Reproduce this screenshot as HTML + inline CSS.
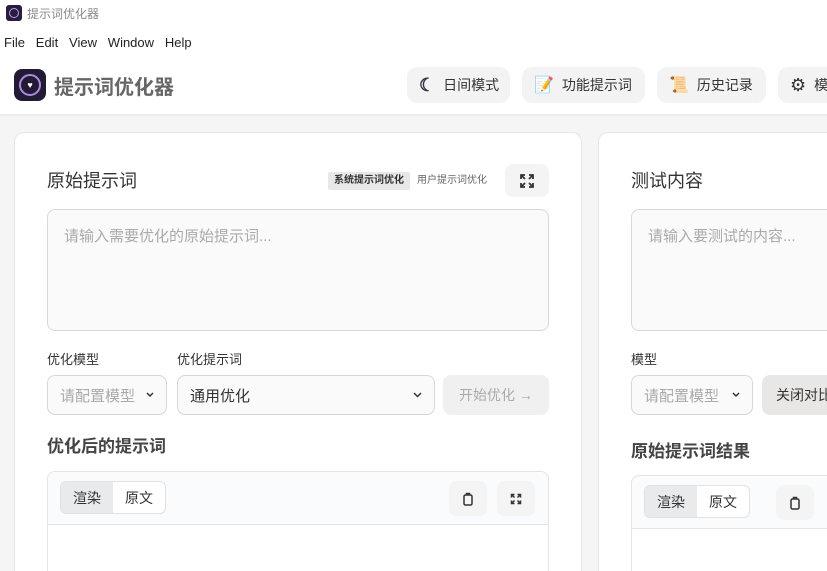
<!DOCTYPE html>
<html><head><meta charset="utf-8"><style>
*{box-sizing:border-box;margin:0;padding:0}
html,body{width:827px;height:571px;overflow:hidden}
body{background:#f5f5f5;font-family:"Liberation Sans","Noto Sans CJK SC",sans-serif;color:#333;position:relative}
.a{position:absolute}
.btn{position:absolute;top:67px;height:36px;background:#f3f3f3;border-radius:10px;font-size:14px;color:#333;display:flex;align-items:center;padding-left:12px;gap:8px}
.card{position:absolute;top:132px;background:#fff;border:1px solid #e6e6e6;border-bottom:none;border-radius:10px 10px 0 0;height:439px}
.ta{position:absolute;background:#fafafa;border:1px solid #d8d8d8;border-radius:8px;font-size:15px;color:#aaa;padding:15px 16px}
.sel{position:absolute;top:375px;height:40px;background:#fafafa;border:1px solid #d6d6d6;border-radius:8px;font-size:15px;display:flex;align-items:center;padding:0 12px;justify-content:space-between}
.lbl{position:absolute;top:349px;font-size:13px;color:#333}
.ob{position:absolute;border:1px solid #e4e4e4;border-bottom:none;border-radius:8px 8px 0 0;background:#fff}
.obh{height:53px;background:#fafbfc;border-bottom:1px solid #e4e4e4;border-radius:8px 8px 0 0}
.tg{position:absolute;height:33px;width:106px;border:1px solid #e2e2e2;border-radius:6px;display:flex;font-size:14px;overflow:hidden;background:#fff}
.tg span{flex:1;display:flex;align-items:center;justify-content:center}
.tg span:first-child{background:#e9eaec}
.ib{position:absolute;width:38px;height:35px;background:#f4f4f4;border-radius:8px;display:flex;align-items:center;justify-content:center}
</style></head><body>
<div class="a" style="left:0;top:0;width:827px;height:115px;background:#fff"></div>
<div class="a" style="left:6px;top:5px;width:16px;height:16px;background:#2a1c3e;border-radius:3px"><div class="a" style="left:3px;top:3px;width:10px;height:10px;border:1.5px solid #b9a0e8;border-radius:50%"></div></div>
<div class="a" style="left:27px;top:5px;font-size:12px;color:#888">提示词优化器</div>
<div class="a" style="left:4px;top:35px;font-size:13px;color:#222">File&nbsp;&nbsp;&nbsp;Edit&nbsp;&nbsp;&nbsp;View&nbsp;&nbsp;&nbsp;Window&nbsp;&nbsp;&nbsp;Help</div>
<div class="a" style="left:14px;top:69px;width:32px;height:32px;background:#231a35;border-radius:8px"><div class="a" style="left:5px;top:5px;width:22px;height:22px;border:2px solid #a98be0;border-radius:50%;color:#fff;font-size:9px;text-align:center;line-height:18px">♥</div></div>
<div class="a" style="left:54px;top:71px;font-size:20px;font-weight:bold;color:#666">提示词优化器</div>
<div class="btn" style="left:407px;width:103px"><span style="font-size:18px;color:#334;font-weight:bold">☾</span>日间模式</div>
<div class="btn" style="left:522px;width:123px"><span style="font-size:16px">📝</span>功能提示词</div>
<div class="btn" style="left:657px;width:109px"><span style="font-size:16px">📜</span>历史记录</div>
<div class="btn" style="left:778px;width:80px"><span style="font-size:18px">⚙</span>模</div>
<div class="a" style="left:0;top:114px;width:827px;height:3px;background:linear-gradient(#e8e8e8,#f5f5f5)"></div>

<div class="card" style="left:14px;width:568px"></div>
<div class="card" style="left:598px;width:229px;border-right:none;border-radius:10px 0 0 0"></div>

<div class="a" style="left:47px;top:167px;font-size:18px">原始提示词</div>
<div class="a" style="left:328px;top:172px;width:82px;height:18px;background:#e8e8e8;border-radius:2px;font-size:10px;font-weight:bold;text-align:center;line-height:18px">系统提示词优化</div>
<div class="a" style="left:417px;top:172px;font-size:10px;line-height:18px;color:#666">用户提示词优化</div>
<div class="ib" style="left:505px;top:164px;width:44px;height:33px"><svg width="16" height="16" viewBox="0 0 16 16" fill="none" stroke="#333" stroke-width="1.8"><path d="M2 6V2h4M2 2l4 4M14 6V2h-4M14 2l-4 4M2 10v4h4M2 14l4-4M14 10v4h-4M14 14l-4-4"/></svg></div>
<div class="ta" style="left:47px;top:209px;width:502px;height:122px">请输入需要优化的原始提示词...</div>
<div class="lbl" style="left:47px">优化模型</div>
<div class="lbl" style="left:177px">优化提示词</div>
<div class="sel" style="left:47px;width:120px;color:#aaa">请配置模型<svg width="8" height="6" viewBox="0 0 8 6"><path d="M1 1l3 3 3-3" stroke="#333" stroke-width="1.5" fill="none"/></svg></div>
<div class="sel" style="left:177px;width:258px;color:#333">通用优化<svg width="9" height="6" viewBox="0 0 9 6"><path d="M1 1l3.5 3.5L8 1" stroke="#333" stroke-width="1.5" fill="none"/></svg></div>
<div class="a" style="left:443px;top:375px;width:106px;height:40px;background:#f0f0f0;border-radius:8px;font-size:14px;color:#aaa;text-align:center;line-height:40px">开始优化 →</div>
<div class="a" style="left:47px;top:432px;font-size:17px;font-weight:bold;color:#444">优化后的提示词</div>
<div class="ob" style="left:47px;top:471px;width:502px;height:100px"><div class="obh"></div></div>
<div class="tg" style="left:60px;top:481px"><span>渲染</span><span>原文</span></div>
<div class="ib" style="left:449px;top:481px"><svg width="10" height="14" viewBox="0 0 10 14" fill="none" stroke="#333" stroke-width="1.5"><rect x="1" y="3" width="8" height="10" rx="1.5"/><path d="M3.5 3V1.5h3V3"/></svg></div>
<div class="ib" style="left:497px;top:481px"><svg width="12" height="12" viewBox="0 0 16 16" fill="none" stroke="#333" stroke-width="2"><path d="M2 6V2h4M2 2l4 4M14 6V2h-4M14 2l-4 4M2 10v4h4M2 14l4-4M14 10v4h-4M14 14l-4-4"/></svg></div>

<div class="a" style="left:631px;top:167px;font-size:18px">测试内容</div>
<div class="ta" style="left:631px;top:209px;width:196px;height:122px;border-right:none;border-radius:8px 0 0 8px">请输入要测试的内容...</div>
<div class="lbl" style="left:631px">模型</div>
<div class="sel" style="left:631px;width:122px;color:#aaa">请配置模型<svg width="8" height="6" viewBox="0 0 8 6"><path d="M1 1l3 3 3-3" stroke="#333" stroke-width="1.5" fill="none"/></svg></div>
<div class="a" style="left:762px;top:375px;width:65px;height:40px;background:#e8e7e5;border-radius:8px 0 0 8px;font-size:14px;line-height:40px;padding-left:14px;white-space:nowrap;overflow:hidden">关闭对比</div>
<div class="a" style="left:631px;top:437px;font-size:17px;font-weight:bold;color:#444">原始提示词结果</div>
<div class="ob" style="left:631px;top:475px;width:196px;height:96px;border-right:none;border-radius:8px 0 0 0"><div class="obh" style="border-radius:8px 0 0 0"></div></div>
<div class="tg" style="left:644px;top:485px"><span>渲染</span><span>原文</span></div>
<div class="ib" style="left:776px;top:485px"><svg width="10" height="14" viewBox="0 0 10 14" fill="none" stroke="#333" stroke-width="1.5"><rect x="1" y="3" width="8" height="10" rx="1.5"/><path d="M3.5 3V1.5h3V3"/></svg></div>
</body></html>
